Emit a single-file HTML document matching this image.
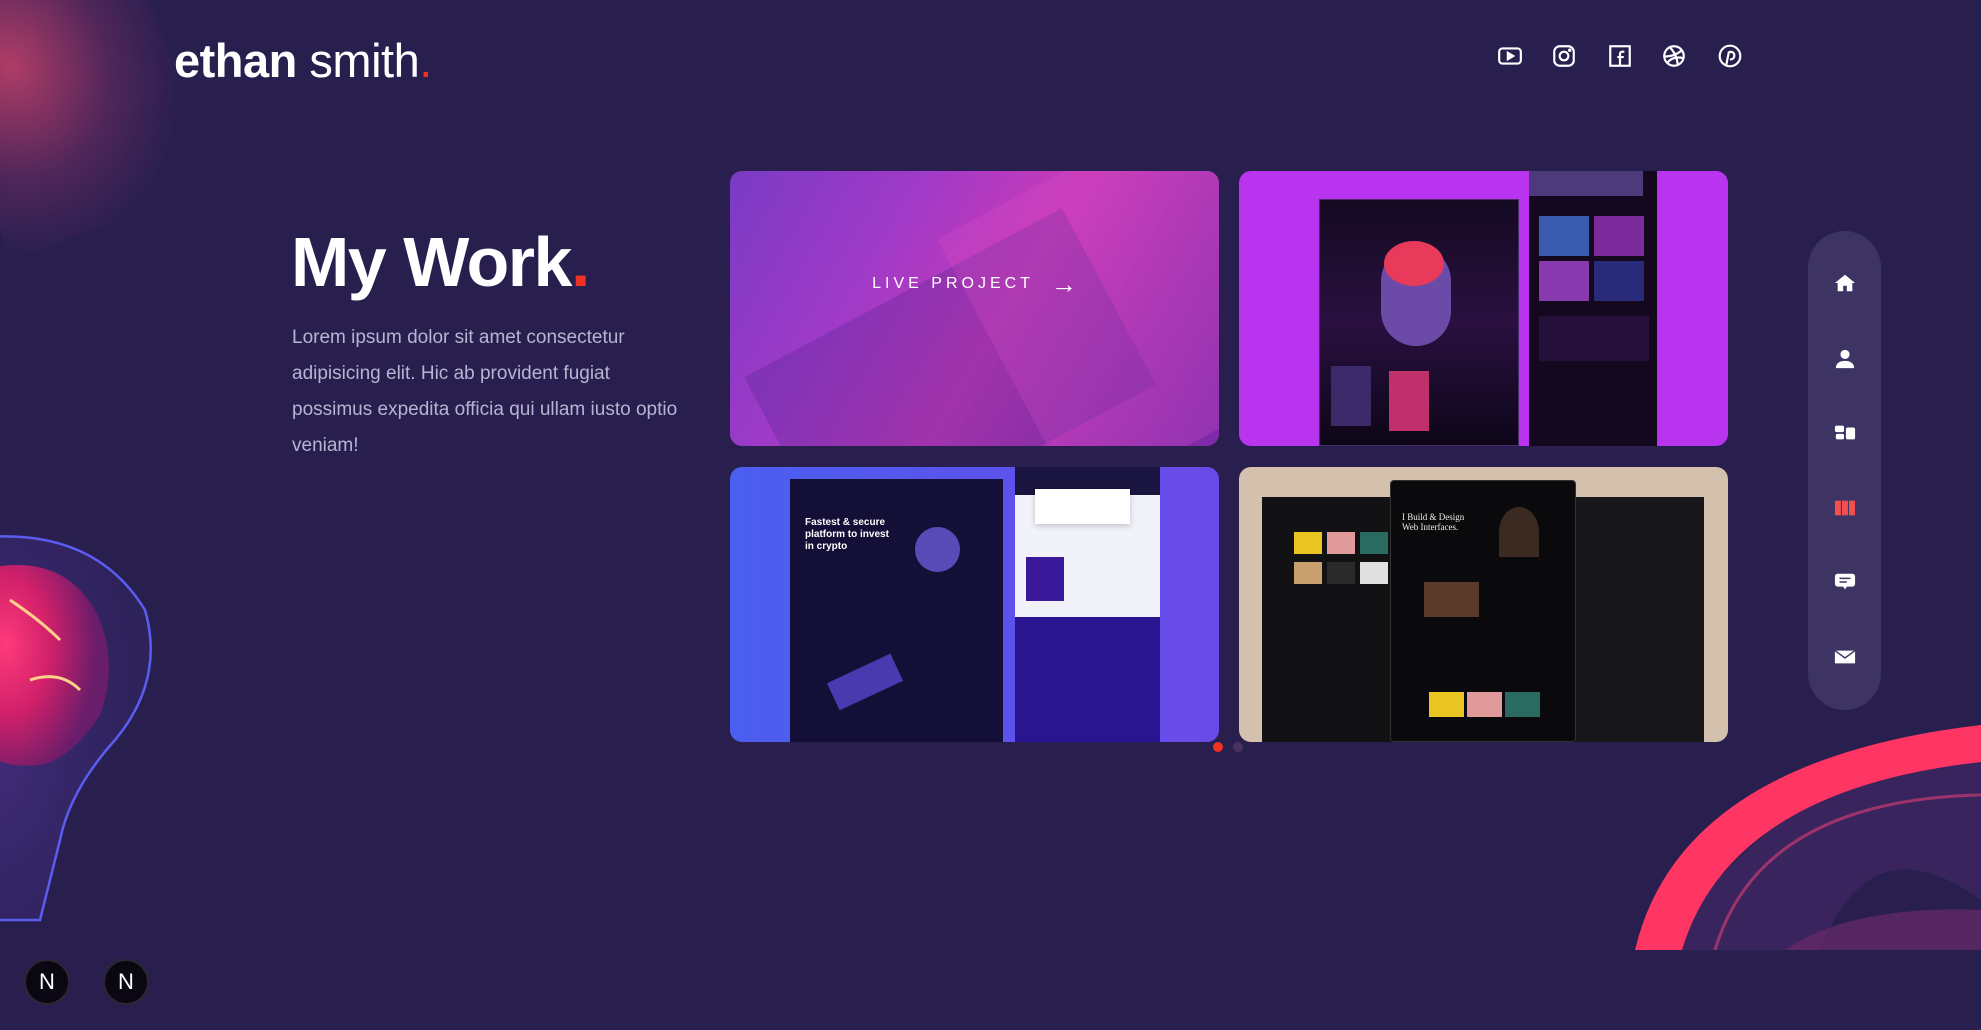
<!DOCTYPE html>
<html><head><meta charset="utf-8"><style>
*{margin:0;padding:0;box-sizing:border-box}
body{width:1981px;height:1030px;overflow:hidden;background:#291f4f;font-family:"Liberation Sans",sans-serif;position:relative}
.abs{position:absolute}
.logo{left:174px;top:33px;font-size:47px;color:#fff;letter-spacing:-0.5px}
.logo b{font-weight:700}.logo span{font-weight:400}
.red{color:#f13024}
h1{position:absolute;left:291px;top:222px;font-size:70px;font-weight:700;color:#fff;letter-spacing:-1.5px}
p.d{position:absolute;left:292px;top:320px;width:400px;font-size:19px;line-height:36px;color:#b9b3d3;font-weight:300}
.card{position:absolute;border-radius:12px;overflow:hidden}
.soc svg{position:absolute;width:26px;height:26px;top:43px}
.side{left:1808px;top:231px;width:73px;height:479px;border-radius:37px;background:#3d3464}
.side svg{position:absolute;left:26px;width:22px;height:22px}
.n{width:46px;height:46px;border-radius:50%;background:#0a0712;border:2px solid #2b2733;color:#fff;font-size:22px;text-align:center;line-height:42px;top:959px}
</style></head><body>
<div class="abs" style="left:-40px;top:-30px;width:220px;height:260px;background:radial-gradient(ellipse at 30% 30%,rgba(220,70,110,.75),rgba(150,50,110,.35) 45%,rgba(41,31,79,0) 75%);transform:rotate(-20deg)"></div>
<svg class="abs" style="left:0;top:500px" width="170" height="440" viewBox="0 0 170 440">
<defs><radialGradient id="br" cx="0.2" cy="0.4" r="0.7"><stop offset="0" stop-color="#ff3a7a"/><stop offset=".5" stop-color="#d0206a"/><stop offset="1" stop-color="#6a1d6a"/></radialGradient>
<radialGradient id="gl" cx=".2" cy=".5" r=".8"><stop offset="0" stop-color="#5a3aa8" stop-opacity=".5"/><stop offset="1" stop-color="#3a2a7a" stop-opacity=".25"/></radialGradient></defs>
<path d="M-40 40 Q90 20 145 110 Q165 180 115 240 Q70 290 60 340 L40 420 L-40 420Z" fill="url(#gl)" stroke="#5b5cf0" stroke-width="2.5"/>
<path d="M-20 70 Q60 50 95 110 Q120 160 100 215 Q70 260 40 265 Q-10 270 -20 240Z" fill="url(#br)"/>
<path d="M10 100 Q40 120 60 140 M30 180 Q60 170 80 190" stroke="#ffd08a" stroke-width="3" fill="none"/>
</svg>
<svg class="abs" style="left:1620px;top:700px" width="361" height="250" viewBox="0 0 361 250">
<path d="M40 250 Q90 180 150 130 Q220 80 361 55 L361 200 Q250 120 200 250Z" fill="#3f2560" opacity=".8"/>
<path d="M15 250 Q60 60 361 25 L361 62 Q110 90 62 250Z" fill="#ff3563"/>
<path d="M95 250 Q140 100 361 95" stroke="#c83a72" stroke-width="3" fill="none" opacity=".7"/>
<path d="M165 250 Q230 205 361 210 L361 250Z" fill="#6a2a6a" opacity=".7"/>
</svg>
<div class="abs logo"><b>ethan</b> <span>smith</span><span class="red">.</span></div>
<div class="soc" style="position:absolute;left:0;top:0">
<svg style="left:1497px" viewBox="0 0 24 24" fill="none" stroke="#fff" stroke-width="2"><rect x="2" y="5" width="20" height="14" rx="3"/><path d="M10 9l5 3-5 3z" fill="#fff"/></svg>
<svg style="left:1551px" viewBox="0 0 24 24" fill="none" stroke="#fff" stroke-width="2"><rect x="3" y="3" width="18" height="18" rx="5"/><circle cx="12" cy="12" r="4"/><circle cx="17.3" cy="6.7" r=".6" fill="#fff"/></svg>
<svg style="left:1607px" viewBox="0 0 24 24" fill="none" stroke="#fff" stroke-width="2"><rect x="3" y="3" width="18" height="18"/><path d="M16 8h-2a2 2 0 0 0-2 2v11M9.5 13h6"/></svg>
<svg style="left:1661px" viewBox="0 0 24 24" fill="none" stroke="#fff" stroke-width="2"><circle cx="12" cy="12" r="9"/><path d="M8 3.8c4 4 7 10 7.5 16.5M3 12.5c6 0 12-2 16.5-6M5.5 18.5c4-5 9-6 15-4.5"/></svg>
<svg style="left:1717px" viewBox="0 0 24 24" fill="none" stroke="#fff" stroke-width="2"><circle cx="12" cy="12" r="9.5"/><path d="M11 8.5c3-1 5 .5 5 3s-2 4-4 3.5M11 8l-2.5 12.5"/></svg>
</div>
<h1>My Work<span class="red">.</span></h1>
<p class="d" style="top:320px">Lorem ipsum dolor sit amet consectetur adipisicing elit. Hic ab provident fugiat possimus expedita officia qui ullam iusto optio veniam!</p>
<div class="card" style="left:730px;top:171px;width:489px;height:275px;background:linear-gradient(120deg,#7a3bc4 0%,#a03ac8 30%,#c83ab8 55%,#9a30b0 80%,#7a2aa8 100%)">
<div class="abs" style="left:40px;top:110px;width:360px;height:200px;background:rgba(90,40,150,.35);transform:rotate(-28deg)"></div>
<div class="abs" style="left:260px;top:-20px;width:300px;height:300px;background:rgba(220,80,200,.25);transform:rotate(-28deg)"></div>
<div class="abs" style="left:0;top:96px;width:489px;height:34px;display:flex;align-items:center;justify-content:center;color:#fff;font-size:16px;letter-spacing:4px">LIVE PROJECT&nbsp;&nbsp;<span style="font-size:26px;letter-spacing:0">→</span></div>
</div>
<div class="card" style="left:1239px;top:171px;width:489px;height:275px;background:#b834ef">
<div class="abs" style="left:80px;top:28px;width:200px;height:247px;background:linear-gradient(180deg,#150a22,#2a1040 50%,#0d0618);border:1px solid #4a2a6a"></div>
<div class="abs" style="left:142px;top:75px;width:70px;height:100px;border-radius:35px;background:#6b4aa8"></div>
<div class="abs" style="left:145px;top:70px;width:60px;height:45px;border-radius:50%;background:#e83a5a"></div>
<div class="abs" style="left:92px;top:195px;width:40px;height:60px;background:#3a2a6a"></div>
<div class="abs" style="left:150px;top:200px;width:40px;height:60px;background:#c0306a"></div>
<div class="abs" style="left:290px;top:0;width:128px;height:275px;background:#13081e"></div>
<div class="abs" style="left:290px;top:0;width:114px;height:25px;background:#4d3a7a"></div>
<div class="abs" style="left:300px;top:45px;width:50px;height:40px;background:#3a5ab0"></div>
<div class="abs" style="left:355px;top:45px;width:50px;height:40px;background:#7a2a9a"></div>
<div class="abs" style="left:300px;top:90px;width:50px;height:40px;background:#8a3ab0"></div>
<div class="abs" style="left:355px;top:90px;width:50px;height:40px;background:#2a2a7a"></div>
<div class="abs" style="left:300px;top:145px;width:110px;height:45px;background:#25103a"></div>
</div>
<div class="card" style="left:730px;top:467px;width:489px;height:275px;background:linear-gradient(90deg,#4a5ef0,#6a4ae8)">
<div class="abs" style="left:60px;top:12px;width:213px;height:263px;background:#130f36"></div>
<div class="abs" style="left:75px;top:50px;color:#fff;font-size:10px;font-weight:700;line-height:12px">Fastest &amp; secure<br>platform to invest<br>in crypto</div>
<div class="abs" style="left:185px;top:60px;width:45px;height:45px;border-radius:50%;background:#5a4ab8"></div>
<div class="abs" style="left:100px;top:200px;width:70px;height:30px;background:#4a3ab0;transform:rotate(-25deg)"></div>
<div class="abs" style="left:285px;top:0;width:145px;height:150px;background:#f2f2fa"></div>
<div class="abs" style="left:285px;top:0;width:145px;height:28px;background:#1a1440"></div>
<div class="abs" style="left:305px;top:22px;width:95px;height:35px;background:#fff;box-shadow:0 2px 6px rgba(0,0,0,.2)"></div>
<div class="abs" style="left:296px;top:90px;width:38px;height:44px;background:#3a1a9a"></div>
<div class="abs" style="left:285px;top:150px;width:145px;height:125px;background:#2a1590"></div>
</div>
<div class="card" style="left:1239px;top:467px;width:489px;height:275px;background:#d3c0ad">
<div class="abs" style="left:23px;top:30px;width:140px;height:245px;background:#121214"></div>
<div class="abs" style="left:55px;top:65px;width:28px;height:22px;background:#e8c520"></div>
<div class="abs" style="left:88px;top:65px;width:28px;height:22px;background:#e09a9a"></div>
<div class="abs" style="left:121px;top:65px;width:28px;height:22px;background:#2a6a60"></div>
<div class="abs" style="left:55px;top:95px;width:28px;height:22px;background:#c8a070"></div>
<div class="abs" style="left:88px;top:95px;width:28px;height:22px;background:#2a2a2a"></div>
<div class="abs" style="left:121px;top:95px;width:28px;height:22px;background:#e0e0e0"></div>
<div class="abs" style="left:330px;top:30px;width:135px;height:245px;background:#17171a"></div>
<div class="abs" style="left:151px;top:13px;width:186px;height:262px;background:#0a0a0c;border:1px solid #333;border-radius:4px"></div>
<div class="abs" style="left:163px;top:45px;color:#eee;font-family:'Liberation Serif',serif;font-size:9px">I Build &amp; Design<br>Web Interfaces.</div>
<div class="abs" style="left:260px;top:40px;width:40px;height:50px;border-radius:50% 50% 0 0;background:#3a2a22"></div>
<div class="abs" style="left:185px;top:115px;width:55px;height:35px;background:#5a3a2a"></div>
<div class="abs" style="left:190px;top:225px;width:35px;height:25px;background:#e8c520"></div>
<div class="abs" style="left:228px;top:225px;width:35px;height:25px;background:#e09a9a"></div>
<div class="abs" style="left:266px;top:225px;width:35px;height:25px;background:#2a6a60"></div>
</div>
<div class="abs" style="left:1213px;top:742px;width:10px;height:10px;border-radius:50%;background:#f13024"></div>
<div class="abs" style="left:1233px;top:742px;width:10px;height:10px;border-radius:50%;background:#4a3260"></div>
<div class="abs side">
<svg style="top:41px" viewBox="0 0 24 24" fill="#fff"><path d="M12 3L1 12h3v9h6v-6h4v6h6v-9h3z"/></svg>
<svg style="top:117px" viewBox="0 0 24 24" fill="#fff"><circle cx="12" cy="7" r="5"/><path d="M2 22c0-6 5-8 10-8s10 2 10 8z"/></svg>
<svg style="top:191px" viewBox="0 0 24 24" fill="#fff"><rect x="1" y="4" width="10" height="7" rx="2"/><rect x="2" y="13" width="9" height="6" rx="2"/><rect x="13" y="6" width="10" height="13" rx="2"/></svg>
<svg style="top:266px" viewBox="0 0 24 24" fill="#f24f4f"><rect x="1" y="4" width="6.5" height="16"/><rect x="8.7" y="4" width="6.5" height="16"/><rect x="16.4" y="4" width="6.5" height="16"/></svg>
<svg style="top:340px" viewBox="0 0 24 24" fill="#fff"><path d="M4 3h16a3 3 0 0 1 3 3v8a3 3 0 0 1-3 3h-6l-2 3-2-3H4a3 3 0 0 1-3-3V6a3 3 0 0 1 3-3z"/><path d="M6 8h12M6 12h8" stroke="#3d3464" stroke-width="1.6"/></svg>
<svg style="top:415px" viewBox="0 0 24 24" fill="#fff"><path d="M1 5h22v14H1z"/><path d="M1 5l11 8 11-8" stroke="#3d3464" stroke-width="1.6" fill="none"/></svg>
</div>
<div class="abs n" style="left:24px">N</div>
<div class="abs n" style="left:103px">N</div>
</body></html>
